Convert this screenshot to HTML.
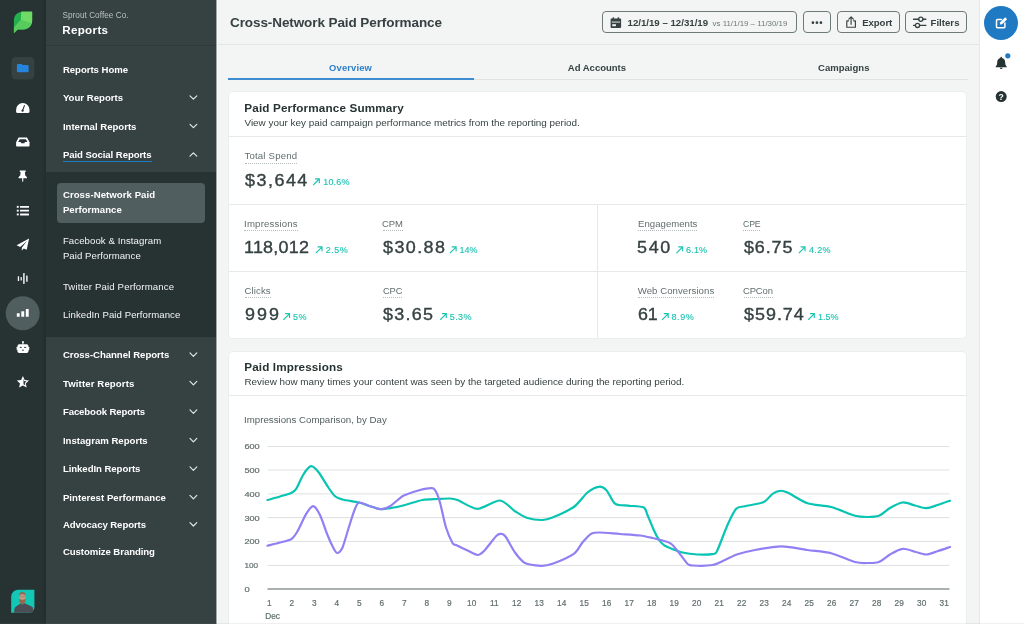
<!DOCTYPE html>
<html lang="en"><head><meta charset="utf-8"><title>Cross-Network Paid Performance</title>
<style>
*{box-sizing:border-box;margin:0;padding:0}
html,body{width:1024px;height:624px;overflow:hidden;background:#f3f4f4;font-family:"Liberation Sans",Arial,sans-serif;color:#364141}
.abs,.t{position:absolute}
.t{white-space:nowrap;line-height:1;font-size:10px}
.b{font-weight:700}
#rail{left:0;top:0;width:46px;height:624px;background:#273333}
#side{left:46px;top:0;width:170px;height:624px;background:#364141}
#sub{left:46px;top:171.5px;width:170px;height:165.5px;background:#273333}
#sel{left:57px;top:182.7px;width:147.7px;height:40px;background:#515e5f;border-radius:4px}
#main-h{left:216px;top:0;width:764px;height:45px;background:#f3f4f4;border-bottom:1px solid #e3e6e6}
#rr{left:979px;top:0;width:45px;height:624px;background:#fff;border-left:1px solid #e6e9e9}
.btn{border:1px solid #6e7979;border-radius:4px;height:22.4px;top:11.1px;background:#f3f4f4}
.card{background:#fff;border:1px solid #eceeee;border-radius:5px}
.hl{background:#e6e9e9;height:1px}
.dot{height:0;border-top:1px dotted #b4bcbc}
svg{position:absolute;left:0;top:0;overflow:visible}
.ax text{font-family:"Liberation Sans",Arial,sans-serif;font-size:8.25px;fill:#626e6e;stroke:#626e6e;stroke-width:.2px}
</style></head><body><div id="wrap" style="position:absolute;left:0;top:0;width:1024px;height:624px;will-change:transform">
<div id="rail" class="abs"></div>
<div class="abs" style="left:42px;top:0;width:4px;height:624px;background:linear-gradient(to right,rgba(0,0,0,0),rgba(0,0,0,.14))"></div>
<div id="side" class="abs"></div>
<div class="abs" style="left:46px;top:44.5px;width:170px;height:1.5px;background:#2e3a3a"></div>
<div id="sub" class="abs"></div>
<div id="sel" class="abs"></div>
<div class="abs" style="left:63.3px;top:160.6px;width:88.3px;height:1.8px;background:#2079c3"></div>

<div id="main-h" class="abs"></div>
<div class="abs" style="left:216px;top:0;width:1px;height:624px;background:#a0a6a6"></div><div class="abs" style="left:217px;top:0;width:1px;height:624px;background:#f8f9f9"></div>
<div class="abs btn" style="left:601.5px;width:195.5px"></div>
<div class="abs btn" style="left:803px;width:28px"></div>
<div class="abs btn" style="left:837px;width:62.5px"></div>
<div class="abs btn" style="left:905px;width:62px"></div>

<div class="abs" style="left:228px;top:78.5px;width:740px;height:1px;background:#dfe2e2"></div>
<div class="abs" style="left:228px;top:77.5px;width:246px;height:2px;background:#408cd1"></div>

<div class="abs card" style="left:227.5px;top:91px;width:739.5px;height:248px"></div>
<div class="abs hl" style="left:228px;top:135.5px;width:739px"></div>
<div class="abs hl" style="left:228px;top:203.7px;width:739px"></div>
<div class="abs hl" style="left:228px;top:271px;width:739px"></div>
<div class="abs" style="left:597px;top:204px;width:1px;height:134px;background:#e6e9e9"></div>

<div class="abs card" style="left:227.5px;top:350.5px;width:739.5px;height:290px"></div>
<div class="abs hl" style="left:228px;top:395px;width:739px"></div>

<div id="rr" class="abs"></div>
<div class="abs" style="left:984.2px;top:5.8px;width:34.2px;height:34.2px;border-radius:50%;background:#2079c3"></div>

<div class="abs" style="left:0;top:623px;width:1024px;height:1px;background:rgba(128,128,128,.12)"></div>
<div class="t" style="left:62.4px;top:11.5px;font-size:8.2px;letter-spacing:0.05px;color:#b9c0c0;">Sprout Coffee Co.</div>
<div class="t b" style="left:62.2px;top:24.2px;font-size:11.6px;letter-spacing:0.34px;color:#fff;">Reports</div>
<div class="t b" style="left:62.9px;top:64.7px;font-size:9.6px;letter-spacing:-0.03px;color:#fff;">Reports Home</div>
<div class="t b" style="left:62.9px;top:93.1px;font-size:9.6px;letter-spacing:0.02px;color:#fff;">Your Reports</div>
<div class="t b" style="left:62.9px;top:121.6px;font-size:9.6px;color:#fff;">Internal Reports</div>
<div class="t b" style="left:62.9px;top:150.1px;font-size:9.6px;letter-spacing:-0.08px;color:#fff;">Paid Social Reports</div>
<div class="t b" style="left:62.9px;top:189.6px;font-size:9.6px;letter-spacing:0.06px;color:#fff;">Cross-Network Paid</div>
<div class="t b" style="left:62.9px;top:205.1px;font-size:9.6px;letter-spacing:0.02px;color:#fff;">Performance</div>
<div class="t b" style="left:62.9px;top:350.2px;font-size:9.6px;letter-spacing:-0.04px;color:#fff;">Cross-Channel Reports</div>
<div class="t b" style="left:62.9px;top:378.7px;font-size:9.6px;letter-spacing:0.13px;color:#fff;">Twitter Reports</div>
<div class="t b" style="left:62.9px;top:407.2px;font-size:9.6px;letter-spacing:-0.10px;color:#fff;">Facebook Reports</div>
<div class="t b" style="left:62.9px;top:435.7px;font-size:9.6px;color:#fff;">Instagram Reports</div>
<div class="t b" style="left:62.9px;top:464.2px;font-size:9.6px;letter-spacing:-0.06px;color:#fff;">LinkedIn Reports</div>
<div class="t b" style="left:62.9px;top:492.7px;font-size:9.6px;letter-spacing:0.03px;color:#fff;">Pinterest Performance</div>
<div class="t b" style="left:62.9px;top:519.9px;font-size:9.6px;letter-spacing:-0.07px;color:#fff;">Advocacy Reports</div>
<div class="t b" style="left:62.9px;top:546.9px;font-size:9.6px;letter-spacing:-0.07px;color:#fff;">Customize Branding</div>
<div class="t" style="left:62.9px;top:236.2px;font-size:9.6px;letter-spacing:0.09px;color:#f3f4f4;">Facebook &amp; Instagram</div>
<div class="t" style="left:62.9px;top:251.2px;font-size:9.6px;letter-spacing:0.07px;color:#f3f4f4;">Paid Performance</div>
<div class="t" style="left:62.9px;top:281.9px;font-size:9.6px;letter-spacing:0.15px;color:#f3f4f4;">Twitter Paid Performance</div>
<div class="t" style="left:62.9px;top:310.2px;font-size:9.6px;letter-spacing:0.07px;color:#f3f4f4;">LinkedIn Paid Performance</div>
<div class="t b" style="left:230.0px;top:16.4px;font-size:13.5px;letter-spacing:-0.09px;color:#364141;">Cross-Network Paid Performance</div>
<div class="t b" style="left:627.5px;top:18.1px;font-size:9.7px;letter-spacing:-0.01px;color:#364141;">12/1/19 – 12/31/19</div>
<div class="t" style="left:712.6px;top:19.5px;font-size:7.9px;color:#6e7979;">vs 11/1/19 – 11/30/19</div>
<div class="t b" style="left:862.3px;top:18.1px;font-size:9.6px;letter-spacing:-0.09px;color:#364141;">Export</div>
<div class="t b" style="left:930.5px;top:18.1px;font-size:9.6px;letter-spacing:0.03px;color:#364141;">Filters</div>
<div class="t b" style="left:329.1px;top:63.0px;font-size:9.4px;letter-spacing:0.15px;color:#2d7fc8;">Overview</div>
<div class="t b" style="left:567.8px;top:63.0px;font-size:9.5px;color:#364141;">Ad Accounts</div>
<div class="t b" style="left:818.0px;top:63.0px;font-size:9.5px;letter-spacing:0.03px;color:#364141;">Campaigns</div>
<div class="t b" style="left:244.3px;top:101.5px;font-size:11.7px;letter-spacing:0.15px;color:#273333;">Paid Performance Summary</div>
<div class="t" style="left:244.5px;top:117.7px;font-size:9.9px;letter-spacing:0.01px;color:#364141;">View your key paid campaign performance metrics from the reporting period.</div>
<div class="t b" style="left:244.3px;top:360.5px;font-size:11.7px;letter-spacing:0.11px;color:#273333;">Paid Impressions</div>
<div class="t" style="left:244.5px;top:376.8px;font-size:9.9px;letter-spacing:-0.01px;color:#364141;">Review how many times your content was seen by the targeted audience during the reporting period.</div>
<div class="t" style="left:244.1px;top:414.8px;font-size:9.7px;color:#515e5f;">Impressions Comparison, by Day</div>
<div class="t" style="left:244.4px;top:151.2px;font-size:9.6px;letter-spacing:0.21px;color:#626e6e;">Total Spend</div>
<div class="abs dot" style="left:244.6px;top:162.9px;width:52.6px"></div>
<div class="t" style="left:244.1px;top:218.6px;font-size:9.6px;letter-spacing:0.18px;color:#626e6e;">Impressions</div>
<div class="abs dot" style="left:244.3px;top:230.3px;width:53.4px"></div>
<div class="t" style="left:382.4px;top:218.6px;font-size:9.6px;letter-spacing:-0.12px;color:#626e6e;transform:scaleX(0.988);transform-origin:0 0;">CPM</div>
<div class="abs dot" style="left:382.6px;top:230.3px;width:20.7px"></div>
<div class="t" style="left:638.1px;top:218.6px;font-size:9.6px;letter-spacing:0.01px;color:#626e6e;">Engagements</div>
<div class="abs dot" style="left:638.3px;top:230.3px;width:59.2px"></div>
<div class="t" style="left:742.7px;top:218.6px;font-size:9.6px;letter-spacing:-0.12px;color:#626e6e;transform:scaleX(0.906);transform-origin:0 0;">CPE</div>
<div class="abs dot" style="left:742.9px;top:230.3px;width:17.6px"></div>
<div class="t" style="left:244.5px;top:285.7px;font-size:9.6px;letter-spacing:0.11px;color:#626e6e;">Clicks</div>
<div class="abs dot" style="left:244.7px;top:297.4px;width:26.0px"></div>
<div class="t" style="left:382.5px;top:285.7px;font-size:9.6px;letter-spacing:-0.12px;color:#626e6e;transform:scaleX(0.970);transform-origin:0 0;">CPC</div>
<div class="abs dot" style="left:382.7px;top:297.4px;width:19.3px"></div>
<div class="t" style="left:637.7px;top:285.7px;font-size:9.6px;letter-spacing:0.07px;color:#626e6e;">Web Conversions</div>
<div class="abs dot" style="left:637.9px;top:297.4px;width:76.4px"></div>
<div class="t" style="left:743.4px;top:285.7px;font-size:9.6px;letter-spacing:-0.12px;color:#626e6e;transform:scaleX(0.983);transform-origin:0 0;">CPCon</div>
<div class="abs dot" style="left:743.6px;top:297.4px;width:29.8px"></div>
<div class="t" style="left:245.1px;top:172.6px;font-size:16.0px;letter-spacing:1.34px;color:#364141;transform:scaleX(1.120);transform-origin:0 0;-webkit-text-stroke:0.36px #364141;">$3,644</div>
<div class="t" style="left:244.1px;top:240.1px;font-size:16.0px;letter-spacing:0.22px;color:#364141;transform:scaleX(1.120);transform-origin:0 0;-webkit-text-stroke:0.36px #364141;">118,012</div>
<div class="t" style="left:383.0px;top:240.1px;font-size:16.0px;letter-spacing:1.28px;color:#364141;transform:scaleX(1.120);transform-origin:0 0;-webkit-text-stroke:0.36px #364141;">$30.88</div>
<div class="t" style="left:637.4px;top:240.1px;font-size:16.0px;letter-spacing:1.52px;color:#364141;transform:scaleX(1.120);transform-origin:0 0;-webkit-text-stroke:0.36px #364141;">540</div>
<div class="t" style="left:744.1px;top:240.1px;font-size:16.0px;letter-spacing:0.79px;color:#364141;transform:scaleX(1.120);transform-origin:0 0;-webkit-text-stroke:0.36px #364141;">$6.75</div>
<div class="t" style="left:244.5px;top:306.8px;font-size:16.0px;letter-spacing:1.83px;color:#364141;transform:scaleX(1.120);transform-origin:0 0;-webkit-text-stroke:0.36px #364141;">999</div>
<div class="t" style="left:382.9px;top:306.8px;font-size:16.0px;letter-spacing:1.17px;color:#364141;transform:scaleX(1.120);transform-origin:0 0;-webkit-text-stroke:0.36px #364141;">$3.65</div>
<div class="t" style="left:638.2px;top:306.8px;font-size:16.0px;letter-spacing:-0.12px;color:#364141;transform:scaleX(1.114);transform-origin:0 0;-webkit-text-stroke:0.36px #364141;">61</div>
<div class="t" style="left:744.1px;top:306.8px;font-size:16.0px;letter-spacing:0.89px;color:#364141;transform:scaleX(1.120);transform-origin:0 0;-webkit-text-stroke:0.36px #364141;">$59.74</div>
<div class="t" style="left:323.2px;top:177.9px;font-size:9.0px;letter-spacing:0.20px;color:#1bc4b0;-webkit-text-stroke:0.12px #1bc4b0;">10.6%</div>
<div class="t" style="left:325.7px;top:246.0px;font-size:9.0px;letter-spacing:0.50px;color:#1bc4b0;-webkit-text-stroke:0.12px #1bc4b0;">2.5%</div>
<div class="t" style="left:459.6px;top:246.0px;font-size:9.0px;letter-spacing:-0.11px;color:#1bc4b0;-webkit-text-stroke:0.12px #1bc4b0;">14%</div>
<div class="t" style="left:686.0px;top:246.0px;font-size:9.0px;letter-spacing:0.20px;color:#1bc4b0;-webkit-text-stroke:0.12px #1bc4b0;">6.1%</div>
<div class="t" style="left:808.9px;top:246.0px;font-size:9.0px;letter-spacing:0.40px;color:#1bc4b0;-webkit-text-stroke:0.12px #1bc4b0;">4.2%</div>
<div class="t" style="left:292.9px;top:312.7px;font-size:9.0px;letter-spacing:0.59px;color:#1bc4b0;-webkit-text-stroke:0.12px #1bc4b0;">5%</div>
<div class="t" style="left:449.7px;top:312.7px;font-size:9.0px;letter-spacing:0.46px;color:#1bc4b0;-webkit-text-stroke:0.12px #1bc4b0;">5.3%</div>
<div class="t" style="left:671.4px;top:312.7px;font-size:9.0px;letter-spacing:0.63px;color:#1bc4b0;-webkit-text-stroke:0.12px #1bc4b0;">8.9%</div>
<div class="t" style="left:817.9px;top:312.7px;font-size:9.0px;color:#1bc4b0;-webkit-text-stroke:0.12px #1bc4b0;">1.5%</div>

<svg width="1024" height="624" viewBox="0 0 1024 624"><line x1="267.5" x2="949.5" y1="446.5" y2="446.5" stroke="#dee1e1" stroke-width="1"/><line x1="267.5" x2="949.5" y1="470.0" y2="470.0" stroke="#dee1e1" stroke-width="1"/><line x1="267.5" x2="949.5" y1="493.9" y2="493.9" stroke="#dee1e1" stroke-width="1"/><line x1="267.5" x2="949.5" y1="517.6" y2="517.6" stroke="#dee1e1" stroke-width="1"/><line x1="267.5" x2="949.5" y1="541.4" y2="541.4" stroke="#dee1e1" stroke-width="1"/><line x1="267.5" x2="949.5" y1="565.4" y2="565.4" stroke="#dee1e1" stroke-width="1"/><line x1="267.5" x2="949.5" y1="589.0" y2="589.0" stroke="#8d9797" stroke-width="1.5"/><g class="ax"><text x="244.4" y="449.4" textLength="15.3" lengthAdjust="spacingAndGlyphs" style="font-size:7.9px">600</text><text x="244.4" y="473.2" textLength="15.3" lengthAdjust="spacingAndGlyphs" style="font-size:7.9px">500</text><text x="244.4" y="496.9" textLength="15.5" lengthAdjust="spacingAndGlyphs" style="font-size:7.9px">400</text><text x="244.4" y="520.6" textLength="15.3" lengthAdjust="spacingAndGlyphs" style="font-size:7.9px">300</text><text x="244.4" y="544.4" textLength="15.2" lengthAdjust="spacingAndGlyphs" style="font-size:7.9px">200</text><text x="244.4" y="568.1" textLength="13.7" lengthAdjust="spacingAndGlyphs" style="font-size:7.9px">100</text><text x="244.4" y="591.9" textLength="5.2" lengthAdjust="spacingAndGlyphs" style="font-size:7.9px">0</text><text x="269.2" y="606.3" text-anchor="middle">1</text><text x="291.7" y="606.3" text-anchor="middle">2</text><text x="314.2" y="606.3" text-anchor="middle">3</text><text x="336.7" y="606.3" text-anchor="middle">4</text><text x="359.2" y="606.3" text-anchor="middle">5</text><text x="381.7" y="606.3" text-anchor="middle">6</text><text x="404.2" y="606.3" text-anchor="middle">7</text><text x="426.7" y="606.3" text-anchor="middle">8</text><text x="449.2" y="606.3" text-anchor="middle">9</text><text x="471.7" y="606.3" text-anchor="middle">10</text><text x="494.2" y="606.3" text-anchor="middle">11</text><text x="516.7" y="606.3" text-anchor="middle">12</text><text x="539.2" y="606.3" text-anchor="middle">13</text><text x="561.7" y="606.3" text-anchor="middle">14</text><text x="584.2" y="606.3" text-anchor="middle">15</text><text x="606.7" y="606.3" text-anchor="middle">16</text><text x="629.2" y="606.3" text-anchor="middle">17</text><text x="651.7" y="606.3" text-anchor="middle">18</text><text x="674.2" y="606.3" text-anchor="middle">19</text><text x="696.7" y="606.3" text-anchor="middle">20</text><text x="719.2" y="606.3" text-anchor="middle">21</text><text x="741.7" y="606.3" text-anchor="middle">22</text><text x="764.2" y="606.3" text-anchor="middle">23</text><text x="786.7" y="606.3" text-anchor="middle">24</text><text x="809.2" y="606.3" text-anchor="middle">25</text><text x="831.7" y="606.3" text-anchor="middle">26</text><text x="854.2" y="606.3" text-anchor="middle">27</text><text x="876.7" y="606.3" text-anchor="middle">28</text><text x="899.2" y="606.3" text-anchor="middle">29</text><text x="921.7" y="606.3" text-anchor="middle">30</text><text x="944.2" y="606.3" text-anchor="middle">31</text><text x="265.3" y="618.5">Dec</text></g><path d="M267.50 500.00C269.2 499.5 276.7 497.5 280.0 496.5C283.3 495.5 289.0 494.1 291.2 493.0C293.5 491.9 294.5 491.4 296.2 488.8C298.0 486.1 301.6 476.9 303.8 473.8C305.9 470.6 309.1 466.4 311.2 466.2C313.4 466.1 316.5 469.7 318.8 472.5C321.0 475.3 325.2 482.9 327.5 486.2C329.8 489.6 332.9 494.4 335.0 496.2C337.1 498.1 339.2 498.6 342.5 499.5C345.8 500.4 354.9 501.6 358.8 502.5C362.6 503.4 366.9 505.3 370.0 506.2C373.1 507.2 378.4 509.0 381.2 509.2C384.1 509.5 386.7 508.8 390.0 508.2C393.3 507.7 400.4 506.2 405.0 505.0C409.6 503.8 417.9 500.8 422.5 500.0C427.1 499.2 433.6 499.2 437.5 499.0C441.4 498.8 447.2 498.4 450.0 498.5C452.8 498.6 453.6 498.6 457.5 500.0C461.4 501.4 471.6 508.7 477.5 508.8C483.4 508.8 494.8 500.1 500.0 500.5C505.2 500.9 511.1 508.8 515.0 511.2C518.9 513.7 523.6 516.8 527.5 518.0C531.4 519.2 539.0 520.1 542.5 520.0C546.0 519.9 548.1 519.3 552.5 517.5C556.9 515.7 568.9 510.5 573.8 507.0C578.6 503.5 584.0 495.3 587.5 492.5C591.0 489.7 596.1 487.1 598.8 486.8C601.4 486.4 604.1 487.8 606.2 490.0C608.4 492.2 612.0 500.4 613.8 502.5C615.5 504.6 616.5 504.5 618.8 505.0C621.0 505.5 626.5 505.4 630.0 505.8C633.5 506.1 641.3 506.2 643.8 507.5C646.2 508.8 646.1 511.9 647.5 515.0C648.9 518.1 652.2 526.6 653.8 530.0C655.3 533.4 657.4 537.4 658.8 539.5C660.1 541.6 662.5 544.0 663.8 545.0C665.0 546.0 664.9 546.0 667.5 547.0C670.1 548.0 678.3 551.5 682.5 552.5C686.7 553.5 693.1 554.3 697.5 554.5C701.9 554.7 711.0 554.4 713.8 553.8C716.5 553.1 715.6 554.0 717.5 550.0C719.4 546.0 724.9 530.8 727.5 525.0C730.1 519.2 733.8 511.4 736.2 508.8C738.7 506.1 741.1 507.2 745.0 506.2C748.9 505.3 759.9 503.8 763.8 502.0C767.6 500.2 770.2 495.3 772.5 493.8C774.8 492.2 777.9 490.9 780.0 490.8C782.1 490.6 783.6 490.8 787.5 492.5C791.4 494.2 801.4 501.2 807.5 503.2C813.6 505.3 824.6 505.2 831.2 507.0C837.9 508.8 849.9 514.4 855.0 515.8C860.1 517.1 864.2 517.0 867.5 517.0C870.8 517.0 875.6 517.0 878.8 515.8C881.9 514.5 886.7 509.9 890.0 508.0C893.3 506.1 899.0 502.9 902.5 502.5C906.0 502.1 911.7 504.7 915.0 505.5C918.3 506.3 923.1 508.3 926.2 508.2C929.4 508.2 934.2 506.1 937.5 505.0C940.8 503.9 948.2 501.3 950.0 500.8" fill="none" stroke="#08c4b2" stroke-width="2.2" stroke-linecap="round" stroke-linejoin="round"/><path d="M267.50 545.75C269.2 545.3 276.7 543.4 280.0 542.5C283.3 541.6 288.8 540.8 291.2 539.2C293.7 537.7 295.4 534.8 297.5 531.2C299.6 527.7 304.0 517.2 306.2 513.8C308.5 510.2 311.3 506.1 313.2 506.2C315.2 506.4 318.0 511.0 320.0 515.0C322.0 519.0 325.6 530.3 327.5 535.0C329.4 539.7 332.4 546.2 333.8 548.8C335.1 551.3 336.3 553.2 337.5 553.0C338.7 552.8 340.9 551.1 342.5 547.5C344.1 543.9 347.0 532.9 348.8 527.5C350.5 522.1 353.5 512.2 355.0 508.8C356.5 505.2 357.1 502.9 359.2 502.5C361.4 502.1 366.9 505.3 370.0 506.2C373.1 507.2 378.4 509.2 381.2 509.2C384.1 509.2 387.4 507.8 390.0 506.2C392.6 504.7 397.9 499.6 400.0 498.0C402.1 496.4 402.2 496.1 405.0 495.0C407.8 493.9 416.4 490.9 420.0 490.0C423.6 489.1 428.9 488.2 431.0 488.2C433.1 488.2 433.7 488.0 435.0 490.0C436.3 492.0 438.5 497.2 440.0 502.5C441.5 507.8 444.2 521.8 446.0 527.5C447.8 533.2 451.1 540.5 452.5 543.0C453.9 545.5 453.9 544.0 456.0 545.0C458.1 546.0 464.5 549.1 467.5 550.5C470.5 551.9 475.2 554.9 477.5 555.0C479.8 555.1 481.3 553.7 484.0 551.0C486.7 548.3 494.1 538.2 496.5 535.8C498.9 533.4 499.7 533.8 501.0 533.9C502.3 534.0 503.5 533.9 505.5 536.5C507.5 539.1 512.3 548.8 515.0 552.5C517.7 556.2 521.3 561.1 525.0 563.0C528.7 564.9 537.4 565.6 541.2 565.8C545.1 565.9 548.0 565.4 552.5 563.8C557.0 562.1 569.5 556.7 573.8 553.8C578.0 550.8 580.0 545.3 582.5 542.5C585.0 539.7 588.8 535.1 591.2 533.8C593.7 532.4 596.0 532.5 600.0 532.5C604.0 532.5 614.4 533.6 620.0 534.0C625.6 534.4 635.5 534.9 640.0 535.5C644.5 536.1 649.4 537.3 652.5 538.0C655.6 538.7 659.9 539.7 662.5 540.5C665.1 541.3 669.0 542.1 671.2 543.8C673.5 545.4 676.5 549.7 678.8 552.5C681.0 555.3 685.6 561.9 687.5 563.8C689.4 565.6 689.0 565.3 692.5 565.5C696.0 565.7 708.0 565.8 712.5 565.0C717.0 564.2 721.5 561.5 725.0 560.0C728.5 558.5 733.3 555.6 737.5 554.2C741.7 552.9 749.8 551.0 755.0 550.0C760.2 549.0 770.5 547.2 775.0 546.8C779.5 546.3 783.0 546.3 787.5 546.8C792.0 547.2 801.4 549.1 807.5 550.0C813.6 550.9 824.6 551.6 831.2 553.2C837.9 554.9 849.9 560.6 855.0 562.0C860.1 563.4 864.2 563.0 867.5 563.0C870.8 563.0 875.6 563.2 878.8 562.0C881.9 560.8 886.7 556.4 890.0 554.5C893.3 552.6 899.0 549.1 902.5 548.8C906.0 548.4 911.7 550.9 915.0 551.8C918.3 552.6 923.1 554.6 926.2 554.5C929.4 554.4 934.2 552.3 937.5 551.2C940.8 550.2 948.2 547.6 950.0 547.0" fill="none" stroke="#9180f4" stroke-width="2.2" stroke-linecap="round" stroke-linejoin="round"/><g fill="none" stroke="#1bc4b0" stroke-width="1.15" stroke-linecap="square"><path d="M313.6 184.6L319.2 179.0M315.5 178.8L319.3 178.8L319.3 182.6"/><path d="M316.3 252.7L321.9 247.1M318.2 246.9L322.0 246.9L322.0 250.7"/><path d="M450.4 252.7L456.0 247.1M452.3 246.9L456.1 246.9L456.1 250.7"/><path d="M676.9 252.7L682.5 247.1M678.8 246.9L682.6 246.9L682.6 250.7"/><path d="M799.3 252.7L804.9 247.1M801.2 246.9L805.0 246.9L805.0 250.7"/><path d="M283.8 319.4L289.4 313.8M285.7 313.6L289.5 313.6L289.5 317.4"/><path d="M440.6 319.4L446.2 313.8M442.5 313.6L446.3 313.6L446.3 317.4"/><path d="M662.5 319.4L668.1 313.8M664.4 313.6L668.2 313.6L668.2 317.4"/><path d="M808.6 319.4L814.2 313.8M810.5 313.6L814.3 313.6L814.3 317.4"/></g></svg>
<svg width="1024" height="624" viewBox="0 0 1024 624"><!-- logo -->
<path d="M32.1 11.8H22.3C17.5 11.8 13.9 15.5 13.9 20.3V33.3L17.8 29.4H23.6C28.4 29.4 32.1 25.8 32.1 21Z" fill="#22b04e"/>
<path d="M32.1 11.8H21.4L20.8 19.8L13.9 27.3V33.3L17.8 29.4H23.6C28.4 29.4 32.1 25.8 32.1 21Z" fill="#55cc5c"/>
<path d="M32.1 11.8H21.4L20.8 19.8L31.8 23.2C32 22.5 32.1 21.8 32.1 21Z" fill="#6fdb66"/>
<!-- folder box -->
<rect x="11.5" y="57" width="22.8" height="22.5" rx="4.5" fill="#364141"/>
<path d="M17.8 63.9H21.3C21.7 63.9 21.9 64 22.2 64.4L22.8 65.1H27.7C28.2 65.1 28.6 65.5 28.6 66V71.3C28.6 71.8 28.2 72.2 27.7 72.2H17.8C17.3 72.2 16.9 71.8 16.9 71.3V64.8C16.9 64.3 17.3 63.9 17.8 63.9Z" fill="#2585de"/>
<g fill="#fff">
<!-- gauge -->
<path d="M17.3 113C16.6 113 16.1 112.5 16.1 111.8V109.7A6.7 6.7 0 0 1 29.5 109.7V111.8C29.5 112.5 29 113 28.3 113Z"/>
<!-- inbox -->
<path d="M18.6 137.6H27L29.5 142.2V145.4C29.5 146 29 146.5 28.4 146.5H17.2C16.6 146.5 16.1 146 16.1 145.4V142.2Z"/>
<!-- pin -->
<path d="M19.8 170.5H25.7V172H24.9L25.2 175.6C26.3 176.2 27 177.1 27 178.3H23.3V181L22.75 182.2L22.2 181V178.3H18.5C18.5 177.1 19.2 176.2 20.3 175.6L20.6 172H19.8Z"/>
<!-- list -->
<rect x="16.8" y="205.9" width="1.9" height="1.9"/><rect x="20" y="205.9" width="9" height="1.9" rx=".4"/>
<rect x="16.8" y="209.7" width="1.9" height="1.9"/><rect x="20" y="209.7" width="9" height="1.9" rx=".4"/>
<rect x="16.8" y="213.5" width="1.9" height="1.9"/><rect x="20" y="213.5" width="9" height="1.9" rx=".4"/>
<!-- plane -->
<path d="M29.1 238.5L16.6 245.2L20.2 246.9L27 240.9L21.8 247.7V250.6L23.8 248.5L26.7 249.8Z"/>
<!-- wave -->
<rect x="17.8" y="276.2" width="1.3" height="4.9" rx=".4"/><rect x="20.6" y="277" width="1.2" height="3.6" rx=".4"/><rect x="23.2" y="273" width="1.4" height="11" rx=".4"/><rect x="26.2" y="275.4" width="1.4" height="6.4" rx=".4"/>
</g>
<circle cx="22.7" cy="313.2" r="17" fill="#515e5f"/>
<g fill="#fff">
<rect x="16.8" y="313.2" width="2.9" height="3.6" rx=".3"/><rect x="21.3" y="311.2" width="2.9" height="5.6" rx=".3"/><rect x="25.8" y="309" width="2.9" height="7.8" rx=".3"/>
<!-- robot -->
<rect x="17.5" y="344.3" width="10.9" height="8.7" rx="1.7"/><rect x="16.7" y="346.8" width="1.2" height="3.4" rx=".4"/><rect x="28" y="346.8" width="1.2" height="3.4" rx=".4"/><rect x="22.45" y="342" width="1" height="2.6"/><circle cx="22.95" cy="342" r=".95"/>
<!-- star -->
<path d="M22.9 376L24.7 380L29 380.5L25.8 383.4L26.7 387.6L22.9 385.5L19.1 387.6L20 383.4L16.8 380.5L21.1 380Z"/>
</g>
<g fill="#273333">
<path d="M24.4 105.6L22.6 110.6" stroke="#273333" stroke-width="1.1" stroke-linecap="round"/><circle cx="22.55" cy="110.7" r="1.15"/>
<path d="M19.7 139.3H25.9L27.4 142H25L24.3 143.3H21.3L20.6 142H18.2Z"/>
<path d="M19.6 347.9A1.1 1.1 0 0 1 21.8 347.9H21A.3 .3 0 0 0 20.4 347.9Z"/><path d="M24.1 347.9A1.1 1.1 0 0 1 26.3 347.9H25.5A.3 .3 0 0 0 24.9 347.9Z"/><path d="M21.8 349.7H24.1A1.15 1.15 0 0 1 21.8 349.7Z"/>
<path d="M23.5 378.9L24.2 381.1L26.5 381.4L24.8 383L25.3 385.3L23.5 384.3Z"/>
</g>
<!-- avatar -->
<clipPath id="av"><path d="M18.2 589.7H34.4V607.3A5.5 5.5 0 0 1 28.9 612.8H11.2V596.7A7 7 0 0 1 18.2 589.7Z"/></clipPath>
<path d="M18.2 589.7H34.4V607.3A5.5 5.5 0 0 1 28.9 612.8H11.2V596.7A7 7 0 0 1 18.2 589.7Z" fill="#12c8b4"/>
<g clip-path="url(#av)"><path d="M13.9 613L14.6 608.2C15.2 606.2 18.6 605.3 20.4 603.4L22.5 604.6L24.6 603.2C27 604.8 31.3 605.6 32.9 607.6L33.6 613Z" fill="#4c4c54"/><ellipse cx="22.4" cy="597.2" rx="3.5" ry="5" fill="#c29a84"/><path d="M19 598.2C19.2 602.6 20.8 604.2 22.4 604.2C24 604.2 25.6 602.6 25.8 598.2C24.6 600.4 20.2 600.4 19 598.2Z" fill="#94664c"/><path d="M19 596C18.6 590.8 26.2 590.8 25.8 596C25 593.6 19.8 593.6 19 596Z" fill="#8a6a55"/><path d="M19.2 596.3H25.6" stroke="#6a5a55" stroke-width=".6" opacity=".6"/></g>
<!-- chevrons -->
<g fill="none" stroke="#e3e6e6" stroke-width="1.2" stroke-linecap="round" stroke-linejoin="round">
<path d="M190 95.8L193.4 99.2L196.8 95.8"/><path d="M190 124.3L193.4 127.7L196.8 124.3"/><path d="M190 156.2L193.4 152.8L196.8 156.2"/>
<path d="M190 352.9L193.4 356.3L196.8 352.9"/><path d="M190 381.4L193.4 384.8L196.8 381.4"/><path d="M190 409.9L193.4 413.3L196.8 409.9"/><path d="M190 438.4L193.4 441.8L196.8 438.4"/><path d="M190 466.9L193.4 470.3L196.8 466.9"/><path d="M190 495.4L193.4 498.8L196.8 495.4"/><path d="M190 522.6L193.4 526L196.8 522.6"/>
</g>
<!-- header icons -->
<g fill="#364141">
<path d="M611.5 18.6H620.2C620.7 18.6 621.1 19 621.1 19.5V27.1C621.1 27.6 620.7 28 620.2 28H611.5C611 28 610.6 27.6 610.6 27.1V19.5C610.6 19 611 18.6 611.5 18.6Z"/>
<rect x="612.6" y="17.2" width="1.5" height="2.6" rx=".5"/><rect x="617.6" y="17.2" width="1.5" height="2.6" rx=".5"/>
<circle cx="812.9" cy="22.7" r="1.35"/><circle cx="816.9" cy="22.7" r="1.35"/><circle cx="820.9" cy="22.7" r="1.35"/>
</g>
<rect x="611.7" y="21.6" width="8.3" height="0.9" fill="#f3f4f4"/><rect x="612.3" y="24.2" width="3.6" height="2" fill="#f3f4f4"/>
<g fill="none" stroke="#364141" stroke-width="1.15" stroke-linecap="round" stroke-linejoin="round">
<path d="M848.6 20.8H846.8V27.2H855.4V20.8H853.6"/><path d="M851.1 24.3V17M848.8 19.2L851.1 16.9L853.4 19.2"/>
<path d="M913.6 19.3H918.6M923 19.3H925.8" stroke-width="1.4"/><circle cx="920.8" cy="19.3" r="2.1" stroke-width="1.3"/>
<path d="M913.6 25.4H915.3M919.7 25.4H925.8" stroke-width="1.4"/><circle cx="917.5" cy="25.4" r="2.1" stroke-width="1.3"/>
</g>
<!-- compose -->
<g fill="none" stroke="#fff" stroke-width="1.5" stroke-linecap="round" stroke-linejoin="round">
<path d="M1001.5 19.4H997.6C997 19.4 996.5 19.9 996.5 20.5V26.7C996.5 27.3 997 27.8 997.6 27.8H1003.8C1004.4 27.8 1004.9 27.3 1004.9 26.7V23"/>
</g>
<path d="M1000.2 22.3L1005.2 17.3L1007.1 19.2L1002.1 24.2L999.9 24.6Z" fill="#fff"/>
<!-- bell -->
<path d="M1001.2 56.7C1001.7 56.7 1002 57 1002 57.5V58C1004 58.4 1005.2 60 1005.2 62.2C1005.2 64.6 1005.8 65.6 1006.7 66.4V67.2H995.7V66.4C996.6 65.6 997.2 64.6 997.2 62.2C997.2 60 998.4 58.4 1000.4 58V57.5C1000.4 57 1000.7 56.7 1001.2 56.7ZM999.8 67.7H1002.6A1.4 1.4 0 0 1 999.8 67.7Z" fill="#273333"/>
<circle cx="1007.8" cy="55.8" r="2.6" fill="#2079c3"/>
<circle cx="1001.2" cy="96.6" r="5.5" fill="#273333"/>
<text x="1001.2" y="99.7" text-anchor="middle" font-family="Liberation Sans, Arial, sans-serif" font-weight="700" font-size="8.6" fill="#fff">?</text>
</svg>
</div></body></html>
